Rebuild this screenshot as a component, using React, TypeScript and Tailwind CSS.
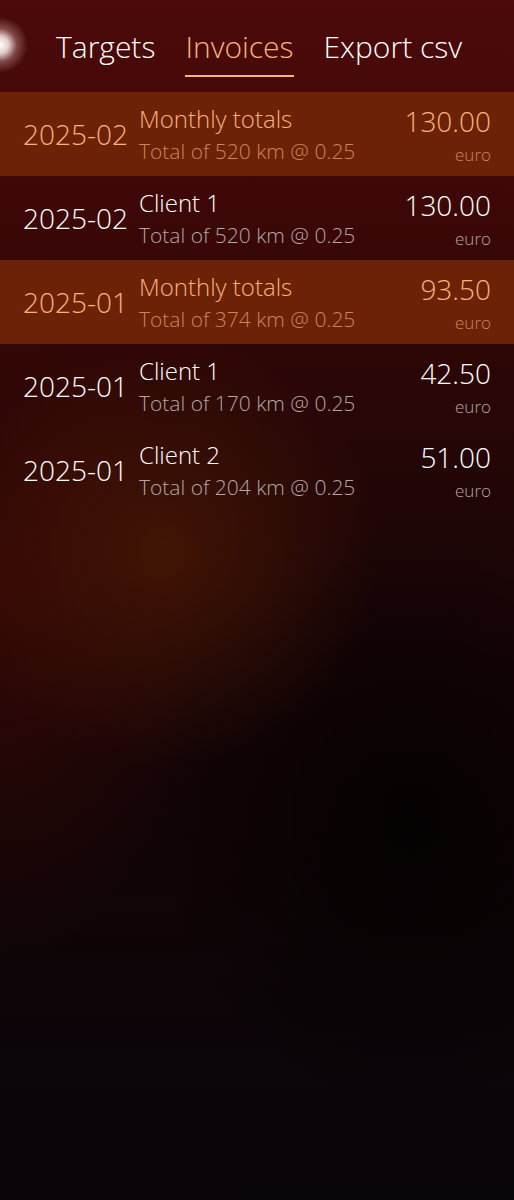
import React from "react";

type Invoice = {
  month: string;
  title: string;
  detail: string;
  amount: string;
  total?: boolean;
};

const invoices: Invoice[] = [
  { month: "2025-02", title: "Monthly totals", detail: "Total of 520 km @ 0.25", amount: "130.00", total: true },
  { month: "2025-02", title: "Client 1", detail: "Total of 520 km @ 0.25", amount: "130.00" },
  { month: "2025-01", title: "Monthly totals", detail: "Total of 374 km @ 0.25", amount: "93.50", total: true },
  { month: "2025-01", title: "Client 1", detail: "Total of 170 km @ 0.25", amount: "42.50" },
  { month: "2025-01", title: "Client 2", detail: "Total of 204 km @ 0.25", amount: "51.00" },
];

const tabs = ["Targets", "Invoices", "Export csv"];

const InvoiceRow = ({ item }: { item: Invoice }) => {
  const main = item.total ? "text-[#f6b27f]" : "text-white";
  const dim = item.total ? "text-[#c9865c]" : "text-[#b3a7a7]";
  return (
    <div
      className={`flex h-[84px] items-center pl-[23px] pr-[23px] ${
        item.total ? "bg-[#6c2207]" : ""
      }`}
    >
      <div className={`w-[116px] shrink-0 text-[28px] leading-none ${main}`}>{item.month}</div>
      <div className="flex flex-1 flex-col pt-[2px]">
        <span className={`text-[24px] leading-[32px] ${main}`}>{item.title}</span>
        <span className={`text-[21px] leading-[32px] ${dim}`}>{item.detail}</span>
      </div>
      <div className="flex flex-col items-end pt-[8px]">
        <span className={`text-[28px] leading-[34px] ${main}`}>{item.amount}</span>
        <span className={`text-[17px] leading-[34px] ${dim}`}>euro</span>
      </div>
    </div>
  );
};

export default function App() {
  return (
    <div
      className="relative min-h-[1200px] w-full overflow-hidden font-light"
      style={{
        fontFamily: '"Open Sans", "Noto Sans", sans-serif',
        background:
          "radial-gradient(ellipse 42% 18% at 32% 46%, rgba(80,26,4,0.7), rgba(80,26,4,0) 100%), radial-gradient(ellipse 40% 30% at 0% 50%, rgba(70,10,4,0.55), rgba(70,10,4,0) 100%), radial-gradient(ellipse 50% 25% at 80% 68%, rgba(0,0,0,0.7), rgba(0,0,0,0) 100%), linear-gradient(to bottom, #4c0a0a 0px, #430808 150px, #330606 300px, #240606 450px, #180406 650px, #110406 850px, #0d0508 1000px, #0a050b 1200px)",
      }}
    >
      {/* glow at the left edge */}
      <div
        className="pointer-events-none absolute left-[-28px] top-[17px] h-[56px] w-[56px]"
        style={{
          background:
            "radial-gradient(circle closest-side, rgba(255,255,255,1) 0%, rgba(255,240,240,0.85) 30%, rgba(255,210,210,0.3) 60%, rgba(255,200,200,0) 100%)",
        }}
      />

      <header className="flex h-[92px] items-start justify-center gap-[30px] pl-[4px] pt-[25px]">
        {tabs.map((tab) => {
          const active = tab === "Invoices";
          return (
            <div key={tab} className="flex flex-col items-stretch">
              <span
                className={`text-[30px] leading-[44px] ${active ? "text-[#f6b27f]" : "text-white"}`}
              >
                {tab}
              </span>
              {active && <span className="mt-[6px] h-[2px] bg-[#f6b27f]" />}
            </div>
          );
        })}
      </header>

      <div className="flex flex-col">
        {invoices.map((item, i) => (
          <InvoiceRow key={i} item={item} />
        ))}
      </div>
    </div>
  );
}
